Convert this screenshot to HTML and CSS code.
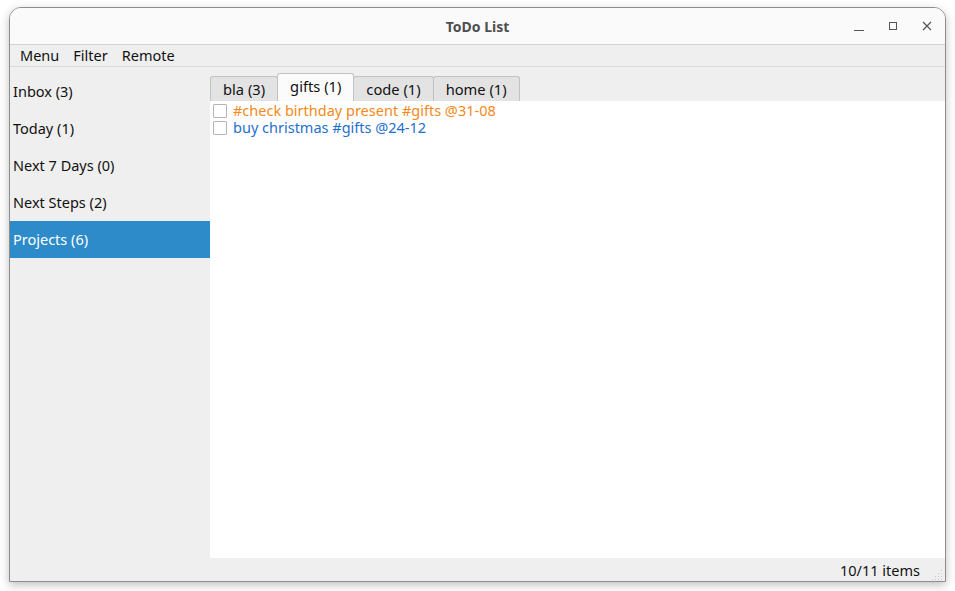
FILE: index.html
```html
<!DOCTYPE html>
<html>
<head>
<meta charset="utf-8">
<link rel="stylesheet" href="styles.css">
</head>
<body>
<div class="window">
  <div class="titlebar">
    <div class="title">ToDo List</div>
    <div class="controls">
      <svg class="ctl" width="12" height="12" viewBox="0 0 12 12"><path d="M1 10.5h10" stroke="#555" stroke-width="1"/></svg>
      <svg class="ctl" width="12" height="12" viewBox="0 0 12 12"><rect x="2.5" y="2.5" width="7" height="7" fill="none" stroke="#555" stroke-width="1"/></svg>
      <svg class="ctl" width="12" height="12" viewBox="0 0 12 12"><path d="M2 2L10 10M10 2L2 10" stroke="#555" stroke-width="1.2"/></svg>
    </div>
  </div>
  <div class="menubar">
    <span class="menu">Menu</span>
    <span class="menu">Filter</span>
    <span class="menu">Remote</span>
  </div>
  <div class="main">
    <div class="sidebar">
      <div class="navitem">Inbox (3)</div>
      <div class="navitem">Today (1)</div>
      <div class="navitem">Next 7 Days (0)</div>
      <div class="navitem">Next Steps (2)</div>
      <div class="navitem selected">Projects (6)</div>
    </div>
    <div class="content">
      <div class="tabs">
        <div class="tab">bla (3)</div>
        <div class="tab active">gifts (1)</div>
        <div class="tab">code (1)</div>
        <div class="tab">home (1)</div>
      </div>
      <div class="list">
        <div class="row orange"><span class="check"></span><span>#check birthday present #gifts @31-08</span></div>
        <div class="row blue"><span class="check"></span><span>buy christmas #gifts @24-12</span></div>
      </div>
    </div>
  </div>
  <div class="statusbar">
    <span class="status">10/11 items</span>
    <svg class="grip" width="11" height="11" viewBox="0 0 11 11">
      <g fill="#c4c4c4">
        <rect x="9" y="1" width="1" height="1"/>
        <rect x="6" y="4" width="1" height="1"/><rect x="9" y="4" width="1" height="1"/>
        <rect x="3" y="7" width="1" height="1"/><rect x="6" y="7" width="1" height="1"/><rect x="9" y="7" width="1" height="1"/>
        <rect x="0" y="10" width="1" height="1"/><rect x="3" y="10" width="1" height="1"/><rect x="6" y="10" width="1" height="1"/><rect x="9" y="10" width="1" height="1"/>
      </g>
    </svg>
  </div>
</div>
</body>
</html>
```
FILE: styles.css
```css
* { box-sizing: border-box; }
html, body { margin: 0; padding: 0; }
body {
  background: #ffffff;
  width: 955px;
  height: 591px;
  overflow: hidden;
  font-family: "Noto Sans", "Open Sans", sans-serif;
  font-size: 14px;
  color: #111;
}
.window {
  margin: 7px 0 0 9px;
  width: 937px;
  height: 575px;
  border: 1px solid #8d8d8d;
  border-radius: 12px 12px 0 0;
  background: #efefef;
  box-shadow: 0 3px 10px rgba(0,0,0,0.25);
  display: flex;
  flex-direction: column;
  overflow: hidden;
}
.titlebar {
  height: 37px;
  flex: none;
  background: #fafafa;
  border-bottom: 1px solid #d2d2d2;
  display: flex;
  align-items: center;
  justify-content: center;
  position: relative;
}
.title {
  font-weight: bold;
  color: #4f4f4f;
  font-size: 14px;
}
.controls {
  position: absolute;
  right: 0;
  top: 0;
  height: 36px;
  display: flex;
  align-items: center;
  gap: 22px;
  padding-right: 12px;
}
.ctl { display: block; }
.menubar {
  height: 22px;
  flex: none;
  display: flex;
  align-items: center;
  padding-left: 10px;
  gap: 14px;
  border-bottom: 1px solid #dadada;
  background: #efefef;
  font-size: 14.5px;
  line-height: 20px;
  padding-bottom: 1px;
}
.main {
  flex: 1;
  display: flex;
  min-height: 0;
}
.sidebar {
  width: 200px;
  flex: none;
  padding-top: 6px;
  background: #efefef;
}
.navitem {
  height: 37px;
  line-height: 37px;
  padding-left: 3px;
  font-size: 14.5px;
  color: #111;
}
.navitem.selected {
  background: #2e8bc9;
  color: #fff;
}
.content {
  flex: 1;
  display: flex;
  flex-direction: column;
  padding-top: 6px;
}
.tabs {
  display: flex;
  align-items: flex-end;
  height: 28px;
  flex: none;
}
.tab {
  height: 25px;
  padding: 0 12px 1px;
  background: #e3e3e3;
  border: 1px solid #c2c2c2;
  border-bottom: none;
  border-radius: 3px 3px 0 0;
  margin-right: -1px;
  display: flex;
  align-items: center;
  font-size: 14.7px;
  color: #111;
}
.tab.active {
  height: 28px;
  background: #fbfbfb;
  position: relative;
  z-index: 1;
  padding-bottom: 3px;
}
.list {
  flex: 1;
  background: #ffffff;
  padding: 1px 0 0 3px;
}
.row {
  height: 17px;
  line-height: 17px;
  display: flex;
  align-items: center;
  gap: 6px;
  font-size: 14.5px;
}
.check {
  width: 14px;
  height: 14px;
  border: 1px solid #b4b4b4;
  background: #fff;
  border-radius: 1px;
  flex: none;
}
.orange { color: #f5891a; }
.blue { color: #1f6fce; }
.statusbar {
  height: 23px;
  flex: none;
  display: flex;
  align-items: center;
  justify-content: flex-end;
  background: #efefef;
  padding-right: 2px;
}
.status {
  font-size: 14.5px;
  margin-right: 12px;
}
.grip { align-self: flex-end; margin-bottom: 1px; }
```
